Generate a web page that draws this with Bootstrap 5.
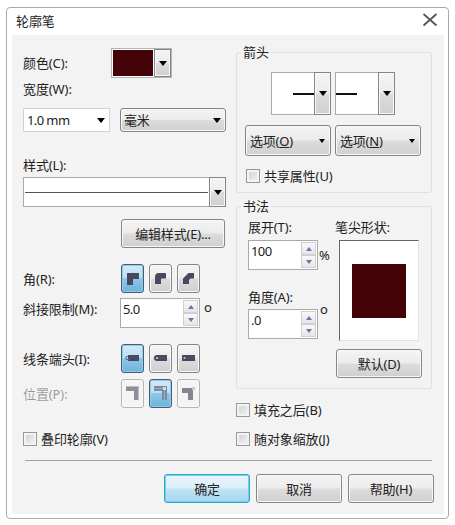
<!DOCTYPE html>
<html lang="zh-CN">
<head>
  <meta charset="UTF-8">
  <title>轮廓笔</title>
  <meta name="viewport" content="width=device-width, initial-scale=1">
  <link href="https://cdn.jsdelivr.net/npm/bootstrap@5.3.0/dist/css/bootstrap.min.css" rel="stylesheet">
  <style>
    body {
      font: 13px/18px "Noto Sans", "Noto Sans CJK SC", sans-serif;
      letter-spacing: -.1px;
      color: #222;
      background: #fff;
      overflow: hidden;
    }
    .dialog { width: 443px; height: 512px; margin: 7px 0 0 6px; border: 1px solid #a9a9a9; border-radius: 4px; padding: 0 4px 4px 5px; }
    .titlebar { height: 27px; padding: 0 6px 2px 4px; }
    .pane { height: 479px; background: #f3f3f3; }
    .side-left { width: 203px; margin-left: 11px; padding-top: 13px; }
    .side-right { width: 196px; margin-left: 10px; padding-top: 17px; }
    .line { display: flex; white-space: nowrap; }
    .line > .name { width: 98px; flex: none; }
    .line > .name-swatch { width: 88px; }
    .line > .name-spin { width: 97px; }

    .face { background: linear-gradient(#f4f4f4, #ececec 48%, #dcdcdc 52%, #d0d0d0); border: 1px solid #858585; border-radius: 3px; box-shadow: inset 0 0 0 1px #f8f8f8; }
    .btn.face { font-size: 13px; line-height: 18px; letter-spacing: -.2px; color: #222; height: 29px; padding: 0; width: 86px; }
    .btn.face.primary { border-color: #3ba4c6; background: linear-gradient(#e9f6fc, #dceff9 48%, #c0e3f4 52%, #a5d8ef); box-shadow: inset 0 0 0 1px #69d3f1; }
    .btn.face.wide { width: 104px; }
    .btn.face.option { height: 31px; display: flex; align-items: center; justify-content: space-between; padding: 0 5px 0 4px; }
    .btn.face.unit { width: 106px; height: 24px; padding: 0 4px 0 3px; }

    .well { background: #fff; border: 1px solid #aaa; }
    .drop { width: 17px; flex: none; border-radius: 0; margin: -1px -1px -1px 0; display: flex; align-items: center; justify-content: center; }
    .tri { width: 0; height: 0; border: 4px solid transparent; border-top: 5px solid #000; border-bottom: 0; }
    .tri.tiny { border-width: 4px 3px 0; }

    .colour { width: 61px; height: 30px; padding: 1px; background: #fff; border: 1px solid #b5b5b5; }
    .colour .ink { margin-right: 1px; }
    .ink { background: #430307; }
    .widthbox { width: 87px; height: 24px; padding: 0 4px 0 3px; border-color: #d2d2d2; letter-spacing: -.6px; }
    .stylebox { width: 203px; height: 30px; }
    .stylebox .rule { height: 1px; background: #555; margin: 0 1px; }
    .arrowbox { width: 60px; height: 43px; }
    .arrowbox .rule { width: 21px; height: 2px; background: #111; }

    .tool { width: 23px; height: 29px; padding: 0; margin-right: 5px; display: flex; align-items: center; justify-content: center; }
    .tool.on { border-color: #3b617c; background: linear-gradient(#d3eaf7, #bfe0f3 46%, #8fc8e8 50%, #6bb3dc); box-shadow: inset 0 0 0 1px #9fc6dc; }
    .tool.off { background: #f4f4f4; border-color: #b6b6b6; }

    .spin { width: 80px; height: 30px; letter-spacing: -.6px; }
    .spin.short { width: 70px; }
    .spin .value { flex: 1; padding: 1px 0 0 2px; }
    .spin .arrows { width: 15px; margin: 1px; }
    .spin .arrows span { flex: 1; border: 1px solid #cfcfd4; background: linear-gradient(#f8f8f8, #e6e6ea); display: flex; align-items: center; justify-content: center; }
    .spin .arrows span::before { content: ""; border: 3px solid transparent; border-bottom: 4px solid #6a76a4; border-top: 0; }
    .spin .arrows span + span::before { border-bottom: 0; border-top: 4px solid #6a76a4; }
    .percent { margin-left: 1px; letter-spacing: -.6px; }
    .degree { margin: -9px 0 0 2px; }

    .check { height: 14px; line-height: 14px; display: flex; align-items: center; white-space: nowrap; }
    .check i { width: 14px; height: 14px; margin-right: 4px; flex: none; border: 1px solid #999; background: linear-gradient(135deg, #cfcfd1, #f4f4f4); box-shadow: inset 0 0 0 2px #f3f3f3; }

    .group { border: 1px solid #d9e2e4; border-radius: 3px; }
    .group .caption { width: max-content; height: 18px; margin: -10px 0 0 4px; padding: 0 2px; background: #f3f3f3; }
    .arrows-group { height: 141px; }
    .arrow-pair { margin: 11px 2px 0 0; }
    .share { margin-left: 9px; }
    .pen-group { height: 183px; margin-top: 13px; }
    .pen-body { margin: 3px 0 0 11px; }
    .pen-values { width: 87px; }
    .nib { width: 80px; height: 101px; margin: 4px 0 0 4px; border: 1px solid #e2e2e2; border-top-color: #666; border-left-color: #666; background: #fff; padding: 23px 0 0 12px; }
    .nib .ink { width: 54px; height: 54px; }
    .reset { margin: 8px 0 0 1px; }
    .parting { height: 1px; width: 407px; margin: 14px 0 0 13px; background: #a2a2a2; }
    .actions { margin: 13px 0 0 152px; gap: 6px; }

    .gap-a { margin-top: 2px; } .gap-b { margin-top: 10px; } .gap-c { margin-top: 24px; }
    .gap-d { margin-top: 3px; } .gap-e { margin-top: 12px; } .gap-f { margin-top: 16px; }
    .gap-g { margin-top: 5px; } .gap-h { margin-top: 6px; } .gap-i { margin-top: 13px; }
    .gap-j { margin-top: 14px; } .gap-k { margin-top: 15px; } .gap-l { margin-top: 18px; }
  </style>
</head>
<body>
  <div class="dialog">
    <div class="titlebar d-flex align-items-center justify-content-between">
      <span>轮廓笔</span>
      <svg width="16" height="16" viewBox="0 0 16 16" class="mb-1"><path d="M1.500 3 14.500 14.500M14.500 3 1.500 14.500" stroke="#555" stroke-width="1.800"/></svg>
    </div>

    <div class="pane">
      <div class="d-flex">
        <!-- 线条设置 -->
        <div class="side-left">
          <div class="line align-items-center">
            <span class="name name-swatch">颜色(C):</span>
            <div class="colour d-flex">
              <div class="ink flex-grow-1"></div>
              <div class="face drop"><span class="tri"></span></div>
            </div>
          </div>
          <div class="gap-a">宽度(W):</div>
          <div class="d-flex justify-content-between gap-b">
            <div class="well widthbox d-flex align-items-center justify-content-between"><span>1.0 mm</span><span class="tri"></span></div>
            <button class="btn face unit d-flex align-items-center justify-content-between"><span>毫米</span><span class="tri"></span></button>
          </div>
          <div class="gap-c">样式(L):</div>
          <div class="well stylebox d-flex gap-d">
            <div class="flex-grow-1 align-self-center"><div class="rule"></div></div>
            <div class="face drop"><span class="tri"></span></div>
          </div>
          <div class="line gap-e">
            <span class="name"></span>
            <button class="btn face wide">编辑样式(E)...</button>
          </div>

          <div class="line align-items-center gap-f">
            <span class="name">角(R):</span>
            <button class="face tool on"><svg width="13" height="13" viewBox="0 1 13 13"><path d="M1 2H13V8H7V14H1Z" fill="#484860"/></svg></button>
            <button class="face tool"><svg width="13" height="13" viewBox="0 1 13 13"><path d="M1 13V6Q1 2 5 2H12V7.500H8Q7 7.500 7 8.500V13Z" fill="#484860"/></svg></button>
            <button class="face tool"><svg width="13" height="13" viewBox="0 1 13 13"><path d="M1 13V7.500L6.500 2H12V7.500H8.500L7 9V13Z" fill="#484860"/></svg></button>
          </div>
          <div class="line gap-g">
            <span class="name name-spin gap-a">斜接限制(M):</span>
            <div class="well spin d-flex">
              <span class="value">5.0</span>
              <div class="arrows d-flex flex-column"><span></span><span></span></div>
            </div>
            <span class="ms-1">o</span>
          </div>

          <div class="line align-items-center gap-f">
            <span class="name">线条端头(I):</span>
            <button class="face tool on"><svg width="15" height="9" viewBox="0 0 15 9"><path d="M3 1H14V7H3Z" fill="#484860"/><path d="M3 2.500H1V5.500H4" fill="none" stroke="#68758a"/><path d="M4 4H12" stroke="#5e5e74" stroke-width=".6"/></svg></button>
            <button class="face tool"><svg width="15" height="9" viewBox="0 0 15 9"><path d="M4 1H14V7H4Q1 7 1 4T4 1Z" fill="#484860"/><circle cx="4" cy="4" r="1.100" fill="#ccc"/><path d="M5 4H12" stroke="#5e5e74" stroke-width=".6"/></svg></button>
            <button class="face tool"><svg width="15" height="9" viewBox="0 0 15 9"><path d="M1 1H14V7H1Z" fill="#484860"/><circle cx="3.500" cy="4" r="1" fill="#ccc"/><path d="M5 4H12" stroke="#5e5e74" stroke-width=".6"/></svg></button>
          </div>
          <div class="line align-items-center gap-h">
            <span class="name text-black-50 opacity-75">位置(P):</span>
            <button class="face tool off"><svg width="15" height="15" viewBox="0 1 15 15"><path d="M1 1H14V15H9V6H1Z" fill="#8f8f9b"/><path d="M1 1.500H13.500V15" fill="none" stroke="#bcbcc6"/></svg></button>
            <button class="face tool on"><svg width="15" height="15" viewBox="0 1 15 15"><path d="M1 1H14V15H9V6H1Z" fill="#7d8ba0"/><path d="M1 3.500H11.500V15" fill="none" stroke="#9aacc0"/><path d="M10 2h3v3h-3z" fill="#cfdde8"/></svg></button>
            <button class="face tool off"><svg width="15" height="15" viewBox="0 1 15 15"><path d="M1 3H12V15H7V8H1Z" fill="#858592"/><path d="M11 2h3v3h-3z" fill="#ccc"/></svg></button>
          </div>
          <div class="check gap-c"><i></i>叠印轮廓(V)</div>
        </div>

        <!-- 箭头与书法 -->
        <div class="side-right">
          <div class="group arrows-group">
            <div class="caption">箭头</div>
            <div class="d-flex justify-content-center gap-1 arrow-pair">
              <div class="well arrowbox d-flex">
                <div class="flex-grow-1 align-self-center"><div class="rule ms-auto"></div></div>
                <div class="face drop"><span class="tri"></span></div>
              </div>
              <div class="well arrowbox d-flex">
                <div class="flex-grow-1 align-self-center"><div class="rule"></div></div>
                <div class="face drop"><span class="tri"></span></div>
              </div>
            </div>
            <div class="d-flex gap-1 gap-b ms-2">
              <button class="btn face option"><span>选项(<u>O</u>)</span><span class="tri tiny"></span></button>
              <button class="btn face option"><span>选项(<u>N</u>)</span><span class="tri tiny"></span></button>
            </div>
            <div class="check share gap-i"><i></i>共享属性(U)</div>
          </div>

          <div class="group pen-group">
            <div class="caption">书法</div>
            <div class="d-flex pen-body">
              <div class="pen-values">
                <div>展开(T):</div>
                <div class="d-flex mt-1">
                  <div class="well spin short d-flex">
                    <span class="value">100</span>
                    <div class="arrows d-flex flex-column"><span></span><span></span></div>
                  </div>
                  <span class="align-self-center percent">%</span>
                </div>
                <div class="gap-l">角度(A):</div>
                <div class="d-flex gap-d">
                  <div class="well spin short d-flex">
                    <span class="value">.0</span>
                    <div class="arrows d-flex flex-column"><span></span><span></span></div>
                  </div>
                  <span class="degree">o</span>
                </div>
              </div>
              <div>
                <div>笔尖形状:</div>
                <div class="nib"><div class="ink"></div></div>
                <button class="btn face reset">默认(D)</button>
              </div>
            </div>
          </div>
          <div class="check gap-j"><i></i>填充之后(B)</div>
          <div class="check gap-k"><i></i>随对象缩放(J)</div>
        </div>
      </div>

      <div class="parting"></div>
      <div class="d-flex actions">
        <button class="btn face primary">确定</button>
        <button class="btn face">取消</button>
        <button class="btn face">帮助(H)</button>
      </div>
    </div>
  </div>
  <script src="https://cdn.jsdelivr.net/npm/bootstrap@5.3.0/dist/js/bootstrap.bundle.min.js"></script>
</body>
</html>
